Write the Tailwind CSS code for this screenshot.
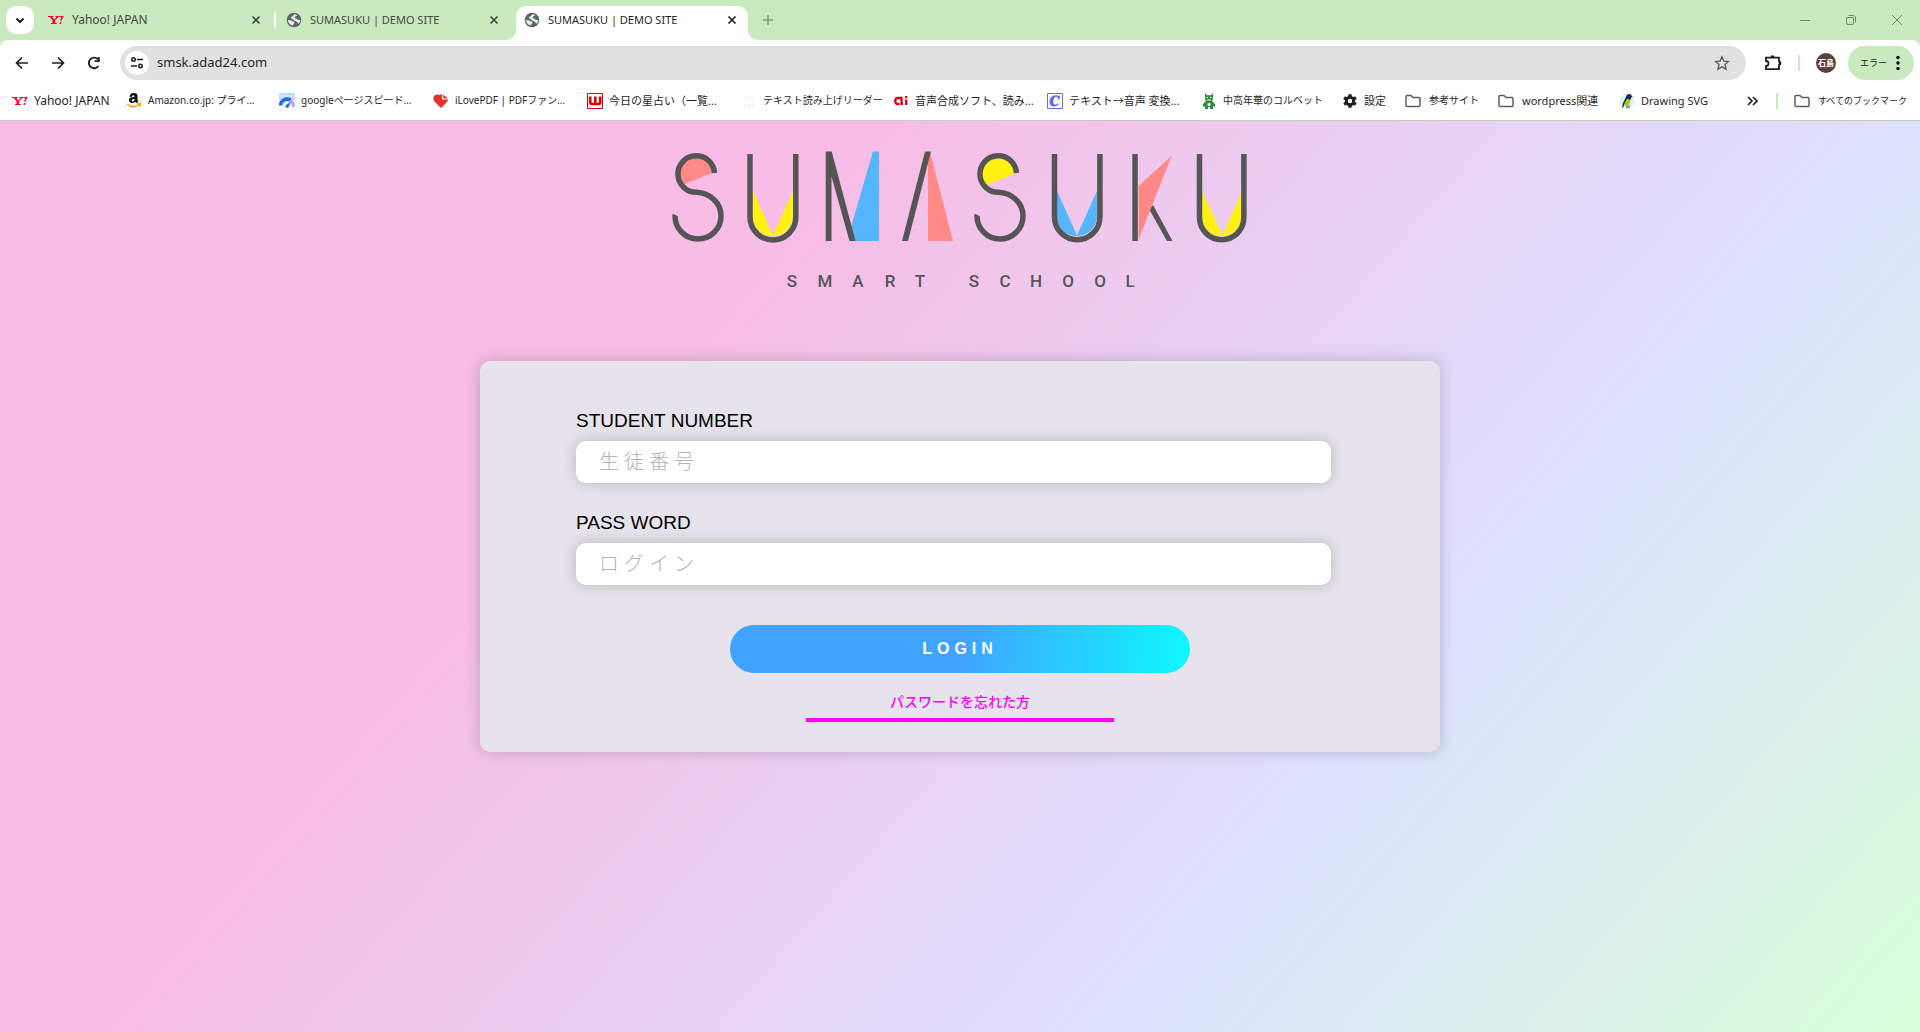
<!DOCTYPE html>
<html lang="ja">
<head>
<meta charset="utf-8">
<title>SUMASUKU | DEMO SITE</title>
<script src="https://cdn.jsdelivr.net/npm/@tailwindcss/browser@4"></script>
</head>
<body class="flex min-h-screen flex-col bg-[#c9e9be] font-['Noto_Sans','Noto_Sans_CJK_JP',sans-serif] text-xs text-[#1f1f1f]">

<svg class="hidden">
  <defs>
    <symbol id="globe" viewBox="0 0 16 16"><circle cx="8" cy="8" r="7.3" fill="#5f6368"/><path d="M1.800 7.500C3 8.800 5 8 6.300 9c.9.700 2.200.5 2.200 1.600 0 1.300-1.700 1.500-1.500 2.900C4 13.200 2 10.500 1.800 7.500zM8.500 2.200c.8 0 2 .3 2.800.9-.3 1-1.500.9-2.200 1.500-.6.700-.3 1.700.7 2 1.200.3 1.600 1.300 2.700 1.400.7.100 1.200-.1 1.700-.1 0 1.500-.7 3-1.600 3.900-.9-.2-.7-1.200-1.500-1.800-.9-.7-2.300-.4-3-1.500C7.400 7.300 6.200 7 5.200 6.300c-.9-.8.2-1.500 1-1.800C7.200 4 7.300 2.800 8.500 2.200z" fill="#e4f0e0"/></symbol>
    <symbol id="close" viewBox="0 0 10 10"><path d="M1.500 1.500l7 7m0-7l-7 7" stroke="currentColor" stroke-width="1.700"/></symbol>
    <symbol id="folder" viewBox="0 0 16 16"><path d="M1 3.500q0-1 1-1h4l2 2h6q1 0 1 1v7q0 1-1 1H2q-1 0-1-1z" fill="none" stroke="#5b5e62" stroke-width="1.500"/></symbol>
    <symbol id="yahoo" viewBox="0 0 16 16"><path d="M0 4h5.500v1.100h-1l1.600 2.600 2.600-2.600H7.500V4h4v1.100h-1.200L7.200 8.500v2.400h1.500V12H3v-1.100h1.500V8.500L2 5.100H0z" fill="#f03"/><path d="M12 4.200Q14.500 3.200 15.700 4l-2.300 5h-1.200l1.200-3.900-1.600.3zM11.900 10.100h1.700l-.5 1.900h-1.700z" fill="#f03"/></symbol>
  </defs>
</svg>

<header>
  <div class="flex h-10 items-end justify-between">
    <div class="flex items-end">
      <button aria-label="タブを検索" class="mb-1.5 ml-1.5 flex size-7 items-center justify-center rounded-[10px] bg-white"><svg class="size-3" viewBox="0 0 12 12"><path d="M2.500 4.500L6 8l3.500-3.500" fill="none" stroke="#1f1f1f" stroke-width="2"/></svg></button>
      <nav class="flex h-[34px] items-stretch text-[#454746]" aria-label="タブ">
        <div class="mb-1.5 ml-3.5 flex w-[226px] items-center">
          <svg class="size-4"><use href="#yahoo"/></svg>
          <a href="#" class="ml-2 grow">Yahoo! JAPAN</a>
          <button aria-label="閉じる" class="mr-[13px]"><svg class="size-2.5"><use href="#close"/></svg></button>
        </div>
        <div class="mb-1.5 flex w-[242px] items-center">
          <span class="h-4 w-0.5 bg-white"></span>
          <svg class="ml-2.5 size-4"><use href="#globe"/></svg>
          <a href="#" class="ml-2 grow text-[11px]">SUMASUKU | DEMO SITE</a>
          <button aria-label="閉じる" class="mr-[17px]"><svg class="size-2.5"><use href="#close"/></svg></button>
        </div>
        <div class="relative flex w-[232px] items-center rounded-t-[10px] bg-white pb-1.5 text-[#1f1f1f]">
          <svg class="absolute bottom-0 -left-2.5 size-2.5" viewBox="0 0 10 10"><path d="M10 0v10H0A10 10 0 0 0 10 0" fill="#fff"/></svg>
          <svg class="absolute -right-2.5 bottom-0 size-2.5" viewBox="0 0 10 10"><path d="M0 0v10h10A10 10 0 0 1 0 0" fill="#fff"/></svg>
          <svg class="ml-2 size-4"><use href="#globe"/></svg>
          <a href="#" class="ml-2 grow text-[11px]">SUMASUKU | DEMO SITE</a>
          <button aria-label="閉じる" class="mr-[11px]"><svg class="size-2.5"><use href="#close"/></svg></button>
        </div>
      </nav>
      <button aria-label="新しいタブ" class="mb-3.5 ml-3.5"><svg class="size-3" viewBox="0 0 12 12"><path d="M6 1v10M1 6h10" stroke="#819a7c" stroke-width="1.500"/></svg></button>
    </div>
    <div class="mb-3.5 flex gap-[34px] pr-[17px]">
      <button aria-label="最小化"><svg class="size-3" viewBox="0 0 12 12"><path d="M1 6.500h10" stroke="#70866a"/></svg></button>
      <button aria-label="元に戻す"><svg class="size-3" viewBox="0 0 12 12" fill="none" stroke="#70866a"><rect x="1.500" y="3.500" width="7" height="7" rx="1.500"/><path d="M3.500 1.500H8q2.500 0 2.500 2.500v4.500"/></svg></button>
      <button aria-label="閉じる"><svg class="size-3" viewBox="0 0 12 12"><path d="M1 1l10 10m0-10L1 11" stroke="#70866a"/></svg></button>
    </div>
  </div>

  <div class="rounded-t-lg border-b border-[#c5cbc4] bg-white">
    <div class="flex h-[46px] items-center pr-1.5">
      <button aria-label="戻る" class="ml-3.5"><svg class="size-4" viewBox="0 0 16 16"><path d="M14 8H3m5-5.500L2.500 8 8 13.500" fill="none" stroke="#1f1f1f" stroke-width="1.700"/></svg></button>
      <button aria-label="進む" class="ml-5"><svg class="size-4" viewBox="0 0 16 16"><path d="M2 8h11M8 2.500L13.500 8 8 13.500" fill="none" stroke="#1f1f1f" stroke-width="1.700"/></svg></button>
      <button aria-label="再読み込み" class="ml-5"><svg class="size-4" viewBox="0 0 16 16"><path d="M12.500 11A5.300 5.300 0 1 1 12 4.300" fill="none" stroke="#1f1f1f" stroke-width="1.900"/><path d="M13.700 2v5H8.500V5.300h3.400V2z" fill="#1f1f1f"/></svg></button>
      <div class="ml-[18px] flex h-[34px] grow items-center rounded-full bg-[#e1e1e1] pr-4 pl-[5px]">
        <button aria-label="サイト情報" class="flex size-6 shrink-0 items-center justify-center rounded-full bg-white"><svg class="size-4" viewBox="0 0 16 16" fill="none" stroke="#1f1f1f" stroke-width="1.600"><circle cx="4.500" cy="4.500" r="1.700"/><path d="M8 4.500h6M2 11h6"/><circle cx="11.500" cy="11" r="1.700"/></svg></button>
        <input aria-label="アドレス" value="smsk.adad24.com" class="ml-2 grow bg-transparent text-[13px] outline-none">
        <button aria-label="ブックマークに追加"><svg class="size-4" viewBox="0 0 16 16"><path d="M8 1.800l1.900 4.300 4.600.4-3.500 3.100 1.100 4.600L8 11.800l-4.100 2.400L5 9.600 1.500 6.500l4.600-.4z" fill="none" stroke="#5b5e62" stroke-width="1.400"/></svg></button>
      </div>
      <button aria-label="拡張機能" class="ml-[18px]"><svg class="size-[18px]" viewBox="0 0 18 18"><path d="M2 3.700h13v4a1.500 1.500 0 0 1 0 3v4.500H2V12a2.500 2.500 0 0 0 0-5z" fill="none" stroke="#1f1f1f" stroke-width="1.800"/><path d="M6.500 3.500a2 2.300 0 0 1 4 0zM15 7.200a2.300 2 0 0 1 0 4z" fill="#1f1f1f"/></svg></button>
      <span class="ml-4 h-4 w-0.5 bg-[#c9e9be]"></span>
      <button aria-label="プロフィール" class="ml-4 flex size-5 items-center justify-center rounded-full bg-[#5d4037] text-[8px] font-bold text-white">石島</button>
      <button class="ml-3 flex h-[34px] w-[66px] items-center rounded-full bg-[#c9e9be] pl-3"><span class="w-6 font-['Noto_Sans_CJK_JP',sans-serif] text-[9px] whitespace-nowrap">エラー</span><svg class="ml-[9px] size-4" viewBox="0 0 16 16"><circle cx="5" cy="2.500" r="1.700"/><circle cx="5" cy="8" r="1.700"/><circle cx="5" cy="13.500" r="1.700"/></svg></button>
    </div>
    <nav class="grid h-[34px] grid-cols-[114px_153px_154px_154px_154px_152px_154px_154px_141px_63px_93px_121px_127px_1fr_auto] items-center pr-3.5 pb-1 pl-3 text-[11px] whitespace-nowrap" aria-label="ブックマーク">
      <a href="#" class="flex items-center gap-1.5 text-xs"><svg class="size-4"><use href="#yahoo"/></svg>Yahoo! JAPAN</a>
      <a href="#" class="flex items-center gap-1.5 text-[10px]"><svg class="size-4" viewBox="0 0 16 16"><path d="M3.500 4Q4 0 7.500 0c3 0 4 1 4 3v4.300l1 1.200L10.500 10.200 9 8.800C7 11 3 10.200 3 7.300c0-2.600 2.500-3.200 5.500-3.200 0-2.500-2.200-2-2.500-.4zm5 2C6.700 6 5.800 6.300 5.800 7.300c0 1.700 2.700 1.500 2.700-.7z" fill="#111"/><path d="M1 11q6 5 12.500.5M11.500 10.700l3-.2-.7 3" fill="none" stroke="#f90" stroke-width="1.500"/></svg>Amazon.co.jp: プライ...</a>
      <a href="#" class="flex items-center gap-1.5 text-[10px]"><svg class="size-4" viewBox="0 0 16 16"><path d="M0 0h16v7H0z" fill="#b9dcfb"/><path d="M0 3h16" stroke="#fff" stroke-width=".7"/><path d="M1.500 12.500a6.500 6.500 0 0 1 10-5.300" fill="none" stroke="#1769f5" stroke-width="3.500"/><path d="M11.500 7.200Q14.500 9.500 14.500 14" fill="none" stroke="#c79aff" stroke-width="3"/><path d="M12 8.500L9.500 14.500a1.900 1.900 0 0 1-3-2z" fill="#1769f5"/></svg>googleページスピード...</a>
      <a href="#" class="flex items-center gap-1.5 text-[10px]"><svg class="size-4" viewBox="0 0 16 16"><path d="M8 15L1.500 8.500C-2 4 3 0 6.500 2L9 1v5.500h6.500L14 9z" fill="#e5322d"/><path d="M10.200 1.500l4.800 4h-4.800z" fill="#e5322d"/></svg>iLovePDF | PDFファン...</a>
      <a href="#" class="flex items-center gap-1.5"><svg class="size-4" viewBox="0 0 16 16"><path d="M.5.500h15v15H.5z" fill="#fff" stroke="#d80000"/><path d="M3.200 3.500v5q0 2.500 2 2.500h6.300q1.700 0 1.700-2V3.500M8.300 3.500v7" fill="none" stroke="#d80000" stroke-width="2.600"/></svg>今日の星占い（一覧...</a>
      <a href="#" class="flex items-center gap-1.5 text-[10px]"><svg class="size-4" viewBox="0 0 16 16"><path d="M2 7l6-4 6 4M4 7v8h3v-4h2v4h3V7" fill="none" stroke="#f4f4f4" stroke-width="1.500"/></svg>テキスト読み上げリーダー</a>
      <a href="#" class="flex items-center gap-1.5"><svg class="size-4" viewBox="0 0 16 16"><path d="M8.500 12V5H5Q2.200 5 2.200 8T5 11h1.500M8.500 9q0 2 1.500 2M13.200 6.500V12M13.200 3v2.200" fill="none" stroke="#e00012" stroke-width="2.300"/></svg>音声合成ソフト、読み...</a>
      <a href="#" class="flex items-center gap-1.5"><svg class="size-4" viewBox="0 0 16 16"><path d="M.5.500h15v15H.5z" fill="#fff" stroke="#6a66f5"/><path d="M12.500 6.500l.5-4q-1 .8-2 .2C6 1 2.500 5 2.500 9c0 5.500 7 5.500 9.200 2l-.8-.8C9 12.500 6 12 6.200 8.500 6.500 5 8.500 3 10 4q1 .7 1.200 2.500z" fill="#6a66f5"/></svg>テキスト→音声 変換...</a>
      <a href="#" class="flex items-center gap-1.5 text-[10px]"><svg class="size-4" viewBox="0 0 16 16"><path d="M4 0l2 2.200h4L12 0v6l-1 2 3 3v3l-2-1v3H9v-2H7v2H4v-3l-2 1v-3l3-3-1-2z" fill="#2d8c3c"/><path d="M5.500 4.500h1.500M9 4.500h1.500M6 7h4M7 10.500h2v2H7z" stroke="#fff" fill="#fff"/></svg>中高年華のコルベット</a>
      <a href="#" class="flex items-center gap-1.5"><svg class="size-4" viewBox="0 0 16 16"><circle cx="8" cy="8" r="3.700" fill="none" stroke="#1f1f1f" stroke-width="3"/><path d="M8 1.200v3M8 11.800v3M2.100 4.600l2.600 1.500M11.300 9.900l2.600 1.500M2.100 11.400l2.600-1.500M11.300 6.100l2.600-1.500" stroke="#1f1f1f" stroke-width="3.400"/></svg>設定</a>
      <a href="#" class="flex items-center gap-2 text-[10px]"><svg class="size-4"><use href="#folder"/></svg>参考サイト</a>
      <a href="#" class="flex items-center gap-2"><svg class="size-4"><use href="#folder"/></svg>wordpress関連</a>
      <a href="#" class="flex items-center gap-1.5 text-[11px]"><svg class="size-4" viewBox="0 0 16 16"><circle cx="8" cy="8" r="7.500" fill="#d9f5fb"/><path d="M6.500 5.500Q9 3 11 5.500q1 4-1.500 7l-2.500 1-2-3z" fill="#a9c41c"/><path d="M7 4q.5-3 3.500-3 2 .2 2.200 2l1 .8-1.200.5-.8 2.200Q9.500 7 8.500 5.500L6 9l-1.500 5-1.500 1 1-5z" fill="#232a4d"/><path d="M8 13v2.500M10 12.500V15" stroke="#444"/></svg>Drawing SVG</a>
      <button aria-label="その他のブックマーク" class="mr-[18px] justify-self-end"><svg class="size-3" viewBox="0 0 12 12"><path d="M2 2l4 4-4 4M7 2l4 4-4 4" fill="none" stroke="#1f1f1f" stroke-width="1.700"/></svg></button>
      <a href="#" class="flex items-center gap-2 text-[9px]"><span class="mr-2 h-4 w-0.5 bg-[#c9e9be]"></span><svg class="size-4"><use href="#folder"/></svg>すべてのブックマーク</a>
    </nav>
  </div>
</header>

<main class="flex grow flex-col items-center bg-[linear-gradient(131deg,#f7bde6_0%,#f7bde6_33%,#dde1ff_70%,#d8ffd8_100%)] pt-7 font-['Liberation_Sans','Noto_Sans_CJK_JP',sans-serif]">
  <h1 class="w-full max-w-[580px]" aria-label="SUMASUKU SMART SCHOOL">
    <svg class="w-full" viewBox="0 0 580 150" fill="none">
      <path d="M10.700 36.500L43.200 23.500A17.500 17.500 0 1 0 17 38Z" fill="#ff8986"/>
      <path d="M312.700 37.500L345.200 24.500A17.500 17.500 0 1 0 319 38Z" fill="#fff212"/>
      <path d="M83 42V69Q85 86 102.500 87Q120 86 123 69V42L102.800 86.500Z" fill="#fff212"/>
      <path d="M387 42V69Q389 86 406.500 87Q424 86 427 69V42L407 86.500Z" fill="#55b5ff"/>
      <path d="M532 42V69Q534 86 551.500 87Q569 86 572 69V42L552.300 86.500Z" fill="#fff212"/>
      <g stroke="#555" stroke-width="5.500">
        <path d="M44.500 24A18.300 18.300 0 1 0 26.500 43.300C40 44 51 54 51 67A23 23 0 0 1 5 67L5.500 66"/>
        <path d="M346.500 24A18.300 18.300 0 1 0 328.500 43.300C342 44 353 54 353 67A23 23 0 0 1 307 67L307.500 66"/>
        <path d="M80 5V68A22.900 22.900 0 0 0 125.800 68V5"/>
        <path d="M384.500 5V68A22.700 22.700 0 0 0 429.900 68V5"/>
        <path d="M529.500 5V68.500A22.200 22.200 0 0 0 573.900 68.500V5"/>
      </g>
      <path d="M203 2.500h6V92h-26.500l-2-12z" fill="#55b5ff"/>
      <path d="M155.700 2.500h6L185.500 92h-6L161.500 27.500V92h-5.800z" fill="#555"/>
      <path d="M260 3L283 92H258V10z" fill="#ff8986"/>
      <path d="M255 2.500h6L238 92h-6z" fill="#555"/>
      <path d="M462.300 5h5.500V92h-5.500z" fill="#555"/>
      <path d="M483 56L502.500 92h-5.500L479 60z" fill="#555"/>
      <path d="M501.700 6.700L468.500 37V91z" fill="#ff8986"/>
      <g fill="#555" text-anchor="middle" class="font-['Roboto',sans-serif] text-[17px] font-medium">
        <text x="122" y="138">S</text><text x="155" y="138">M</text><text x="188" y="138">A</text><text x="220" y="138">R</text><text x="250" y="138">T</text>
        <text x="304" y="138">S</text><text x="335" y="138">C</text><text x="366" y="138">H</text><text x="398" y="138">O</text><text x="430" y="138">O</text><text x="460" y="138">L</text>
      </g>
    </svg>
  </h1>

  <form class="mt-[62px] mb-8 w-1/2 rounded-[10px] bg-[#e6e3ed] px-24 pt-12 pb-[30px] shadow-[0_0_15px_rgba(0,0,0,0.2)]" onsubmit="return false">
    <label for="student" class="block h-8 text-[19px] leading-6 text-black">STUDENT NUMBER</label>
    <input id="student" type="text" placeholder="生徒番号" class="block h-[42px] w-[calc(100%-13px)] rounded-[10px] bg-white pl-[23px] text-xl font-light tracking-[5px] shadow-[0_0_15px_rgba(0,0,0,0.2)] placeholder:text-[#b4b4b4]">
    <label for="password" class="mt-7 block h-8 text-[19px] leading-6 text-black">PASS WORD</label>
    <input id="password" type="password" placeholder="ログイン" class="block h-[42px] w-[calc(100%-13px)] rounded-[10px] bg-white pl-[23px] text-xl font-light tracking-[5px] shadow-[0_0_15px_rgba(0,0,0,0.2)] placeholder:text-[#b4b4b4]">
    <button type="submit" class="mx-auto mt-10 block h-12 w-[460px] max-w-full rounded-full bg-[linear-gradient(95deg,#40a3ff_0%,#40a3ff_50%,#0ff8ff_100%)] text-base font-bold tracking-[5px] text-white">LOGIN</button>
    <a href="#" class="mx-auto mt-[18px] block w-[308px] max-w-full border-b-4 border-[#ff00ff] pb-[5px] text-center text-sm leading-[22px] font-medium text-[#ff00ff]">パスワードを忘れた方</a>
  </form>
</main>
</body>
</html>
